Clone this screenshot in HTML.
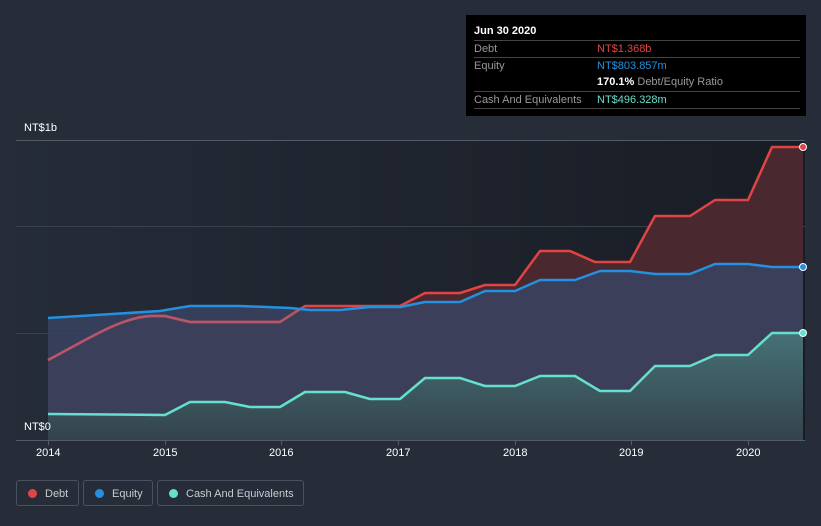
<!DOCTYPE html>
<html><head><meta charset="utf-8"><style>
body{margin:0;width:821px;height:526px;background:#262d39;font-family:"Liberation Sans",sans-serif;overflow:hidden;position:relative}
.tt{position:absolute;left:466px;top:15px;width:340px;height:101px;background:#000;color:#fff;font-size:11px}
.tt .h{position:absolute;left:8px;top:10px;font-weight:bold}
.tt .r{position:absolute;left:8px;right:6px;height:17px;border-top:1px solid #444;line-height:17px;color:#999}
.tt .v{position:absolute;left:123px}
.leg{position:absolute;top:480px;height:26px;border:1px solid #4a5160;border-radius:3px;color:#c8cbd0;font-size:11px;line-height:26px;box-sizing:border-box;white-space:nowrap}
.leg i{position:absolute;left:11px;top:8px;width:9px;height:9px;border-radius:50%}
.leg span{position:absolute;left:28px;white-space:nowrap}
.ax{position:absolute;color:#fff;font-size:11px}
</style></head><body>
<svg width="821" height="526" style="position:absolute;left:0;top:0">
<defs><linearGradient id="bg" x1="0" x2="1"><stop offset="0" stop-color="#252c38"/><stop offset="1" stop-color="#181c24"/></linearGradient>
<linearGradient id="cg" x1="0" y1="0" x2="0" y2="1"><stop offset="0" stop-color="#467176"/><stop offset="1" stop-color="#34434c"/></linearGradient></defs>
<rect x="16" y="140" width="789" height="300" fill="url(#bg)"/>
<g stroke="#3a404c" stroke-width="1"><line x1="16" y1="140.5" x2="805" y2="140.5" stroke="#555b66"/><line x1="16" y1="226.5" x2="805" y2="226.5"/><line x1="16" y1="333.5" x2="805" y2="333.5"/><line x1="16" y1="440.5" x2="805" y2="440.5" stroke="#555b66"/></g>
<path d="M48,360 C90,338 120,318 150,316 L165,316 L190,322 L280,322 L305,306 L400,306 L425,293 L460,293 L485,285 L515,285 L540,251 L570,251 L595,262 L630,262 L655,216 L690,216 L715,200 L748,200 L772,147 L803,147 L803,440 L48,440Z" fill="#4a2830"/>
<path d="M48,318 L160,311 L190,306 L240,306 L290,308 L310,310 L340,310 L370,307 L400,307 L425,302 L460,302 L485,291 L515,291 L540,280 L575,280 L600,271 L630,271 L655,274 L690,274 L715,264 L748,264 L772,267 L803,267 L803,440 L48,440Z" fill="#3a4360" fill-opacity="0.85"/>
<path d="M48,414 L165,415 L190,402 L225,402 L250,407 L280,407 L305,392 L345,392 L370,399 L400,399 L425,378 L460,378 L485,386 L515,386 L540,376 L575,376 L600,391 L630,391 L655,366 L690,366 L715,355 L748,355 L772,333 L803,333 L803,440 L48,440Z" fill="url(#cg)"/>
<path d="M48,360 C90,338 120,318 150,316 L165,316 L190,322 L280,322 L305,306 L400,306 L425,293 L460,293 L485,285 L515,285 L540,251 L570,251 L595,262 L630,262 L655,216 L690,216 L715,200 L748,200 L772,147 L803,147" fill="none" stroke="#e04545" stroke-width="2.5" stroke-linejoin="round"/>
<path d="M48,360 C90,338 120,318 150,316 L165,316 L190,322 L280,322 L300,309" fill="none" stroke="#b5566a" stroke-width="2.5" stroke-linejoin="round"/>
<path d="M48,318 L160,311 L190,306 L240,306 L290,308 L310,310 L340,310 L370,307 L400,307 L425,302 L460,302 L485,291 L515,291 L540,280 L575,280 L600,271 L630,271 L655,274 L690,274 L715,264 L748,264 L772,267 L803,267" fill="none" stroke="#2391e0" stroke-width="2.5" stroke-linejoin="round"/>
<path d="M48,414 L165,415 L190,402 L225,402 L250,407 L280,407 L305,392 L345,392 L370,399 L400,399 L425,378 L460,378 L485,386 L515,386 L540,376 L575,376 L600,391 L630,391 L655,366 L690,366 L715,355 L748,355 L772,333 L803,333" fill="none" stroke="#65e0cc" stroke-width="2.5" stroke-linejoin="round"/>
<circle cx="803" cy="147" r="3.5" fill="#e04545" stroke="#fff"/><circle cx="803" cy="267" r="3.5" fill="#2391e0" stroke="#fff"/><circle cx="803" cy="333" r="3.5" fill="#65e0cc" stroke="#fff"/>
<g stroke="#555b66"><line x1="48.5" y1="440" x2="48.5" y2="445"/><line x1="165.5" y1="440" x2="165.5" y2="445"/><line x1="281.5" y1="440" x2="281.5" y2="445"/><line x1="398.5" y1="440" x2="398.5" y2="445"/><line x1="515.5" y1="440" x2="515.5" y2="445"/><line x1="631.5" y1="440" x2="631.5" y2="445"/><line x1="748.5" y1="440" x2="748.5" y2="445"/></g>
</svg>
<div class="ax" style="left:24px;top:122px">NT$1b</div>
<div class="ax" style="left:24px;top:421px">NT$0</div>
<div class="ax" style="left:36px;top:447px">2014</div><div class="ax" style="left:153px;top:447px">2015</div><div class="ax" style="left:269px;top:447px">2016</div><div class="ax" style="left:386px;top:447px">2017</div><div class="ax" style="left:503px;top:447px">2018</div><div class="ax" style="left:619px;top:447px">2019</div><div class="ax" style="left:736px;top:447px">2020</div>
<div class="tt"><div class="h">Jun 30 2020</div>
<div class="r" style="top:25px">Debt<span class="v" style="color:#e04545">NT$1.368b</span></div>
<div class="r" style="top:42px">Equity<span class="v" style="color:#2391e0">NT$803.857m</span></div>
<div class="r" style="top:59px;border-top:none"><span class="v" style="color:#fff;font-weight:bold">170.1% <span style="color:#999;font-weight:normal">Debt/Equity Ratio</span></span></div>
<div class="r" style="top:76px">Cash And Equivalents<span class="v" style="color:#65e0cc">NT$496.328m</span></div>
<div class="r" style="top:93px;height:0"></div></div>
<div class="leg" style="left:16px;width:63px"><i style="background:#e04545"></i><span>Debt</span></div>
<div class="leg" style="left:83px;width:70px"><i style="background:#2391e0"></i><span>Equity</span></div>
<div class="leg" style="left:157px;width:147px"><i style="background:#65e0cc"></i><span>Cash And Equivalents</span></div>
</body></html>
